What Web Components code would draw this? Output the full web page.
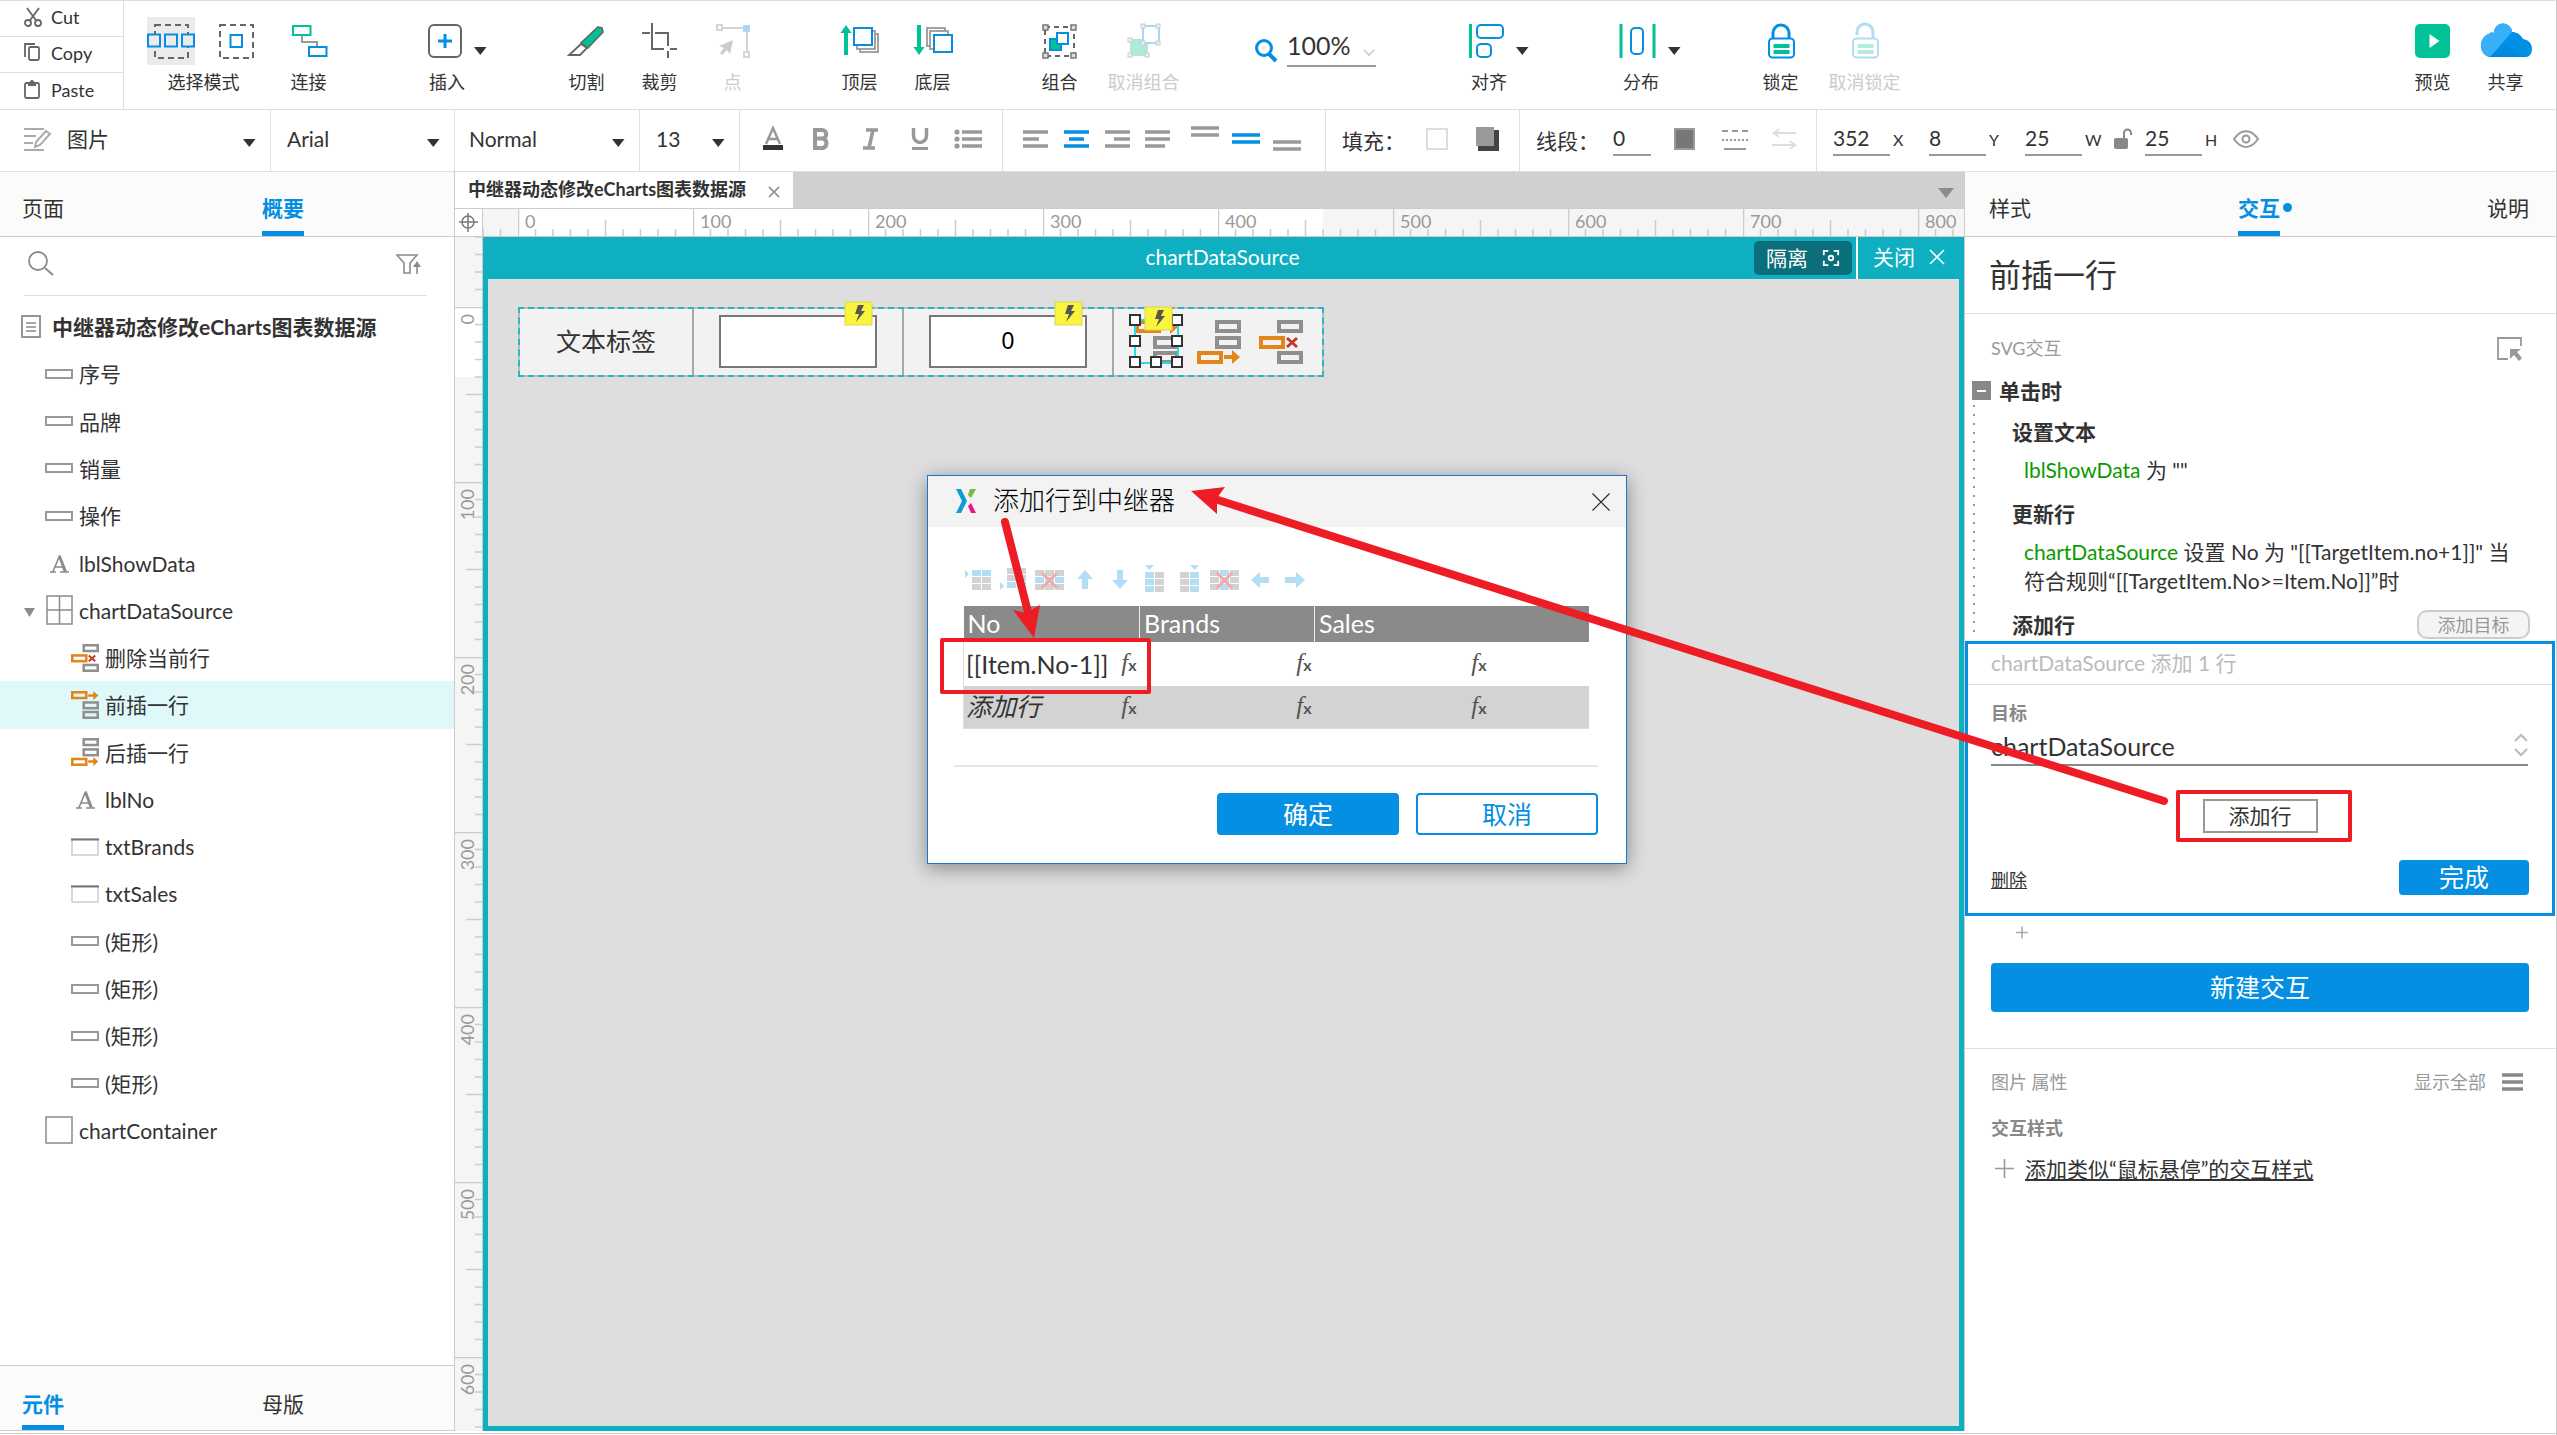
<!DOCTYPE html>
<html lang="zh-CN">
<head>
<meta charset="utf-8">
<title>中继器动态修改eCharts图表数据源</title>
<style>
  :root {
    --blue: #048fe3;
    --teal: #0eafc1;
    --green: #00c296;
    --ink: #333;
    --muted: #999;
    --line: #e0e0e0;
    --red: #ee1c25;
    --fs-s: 18px;
    --fs-m: 21px;
    --fs-l: 25px;
  }
  body {
    margin: 0;
    height: 100vh;
    box-sizing: border-box;
    border-top: 1px solid #ddd;
    border-right: 1px solid #ccc;
    display: flex;
    flex-direction: column;
    position: relative;
    overflow: hidden;
    background: #fff;
    color: var(--ink);
    font: 21px/29px Lato, "Noto Sans CJK SC", sans-serif;
  }
  .workspace { flex: 1; min-height: 0; display: grid; grid-template-columns: 455px minmax(0, 1fr) 592px; }
  footer { height: 1px; margin-top: 2px; border-top: 1px solid #ccc; }
</style>
</head>
<body>
  <ax-toolbar></ax-toolbar>
  <ax-formatbar></ax-formatbar>
  <div class="workspace">
    <ax-outline></ax-outline>
    <ax-editor></ax-editor>
    <ax-inspector></ax-inspector>
  </div>
  <footer></footer>
  <ax-dialog heading="添加行到中继器"></ax-dialog>
  <ax-annotations></ax-annotations>

<script>
const RESET = `
  *, *::before, *::after { box-sizing: border-box; }
  button, input, select { font: inherit; color: inherit; background: none; border: 0; padding: 0; margin: 0; border-radius: 0; outline: 0; min-width: 0; }
  button { cursor: pointer; }
  select { appearance: none; }
  h1, h2, h3, p, ul { margin: 0; padding: 0; font: inherit; }
  a { color: inherit; }
`;
function define(name, render) {
  customElements.define(name, class extends HTMLElement {
    connectedCallback() {
      if (this.shadowRoot) return;
      const root = this.attachShadow({ mode: 'open' });
      root.innerHTML = `<style>${RESET}</style>` + render(this);
    }
  });
}

/* ---------- icons: [width, height, content] ---------- */
const G = '#00c296', B = '#048fe3', D = '#666', M = '#999';
const corner = (x, y, c) => `<rect x="${x}" y="${y}" width="5" height="5" fill="#ddd" stroke="${c}" stroke-width="1.5"/>`;
const cells = (cols, blue) => {
  let s = '';
  for (let r = 0; r < 3; r++) for (let c = 0; c < cols; c++)
    s += `<rect x="${c * 10}" y="${r * 7}" width="9" height="6" fill="${blue(r, c) ? '#b3def5' : '#d2d2d2'}"/>`;
  return s;
};
const cross = '<path d="M7 3L22 18M22 3L7 18" stroke="#f4a9a9" stroke-width="3"/>';
const barG = (y) => `<rect x="20" y="${y}" width="22" height="9" fill="none" stroke="#8f8f8f" stroke-width="4"/>`;
const barO = (y) => `<rect x="2" y="${y}" width="22" height="9" fill="none" stroke="#e0861a" stroke-width="4"/>`;
const arrO = (y) => `<path d="M27 ${y - 2}h8v-5l8 7-8 7v-5h-8z" fill="#e0861a"/>`;
const ICONS = {
  cut: [20, 22, `<g fill="none" stroke="${D}" stroke-width="1.8"><circle cx="5" cy="17" r="3"/><circle cx="15" cy="17" r="3"/><path d="M4 2L13.500 15M16 2L6.500 15"/></g>`],
  copy: [20, 22, `<g fill="none" stroke="${D}" stroke-width="1.800"><path d="M2 15V2h10"/><rect x="6" y="5" width="10" height="13" rx="1.500"/></g>`],
  paste: [20, 22, `<rect x="2" y="4" width="14" height="15" rx="1.500" fill="none" stroke="${D}" stroke-width="1.800"/><path d="M5 3h2a2 2 0 0 1 4 0h2v4H5z" fill="${D}"/>`],
  selA: [48, 48, `<rect width="48" height="48" fill="#ebebeb"/><rect x="8" y="8" width="33" height="33" fill="none" stroke="${D}" stroke-width="2" stroke-dasharray="6 4"/><g fill="#ebebeb" stroke="${B}" stroke-width="2"><rect x="1" y="17.500" width="12" height="12"/><rect x="18" y="17.500" width="12" height="12"/><rect x="35" y="17.500" width="12" height="12"/></g>`],
  selB: [48, 48, `<rect x="8" y="8" width="33" height="33" fill="none" stroke="${D}" stroke-width="2" stroke-dasharray="6 4"/><rect x="18.500" y="18" width="11.500" height="12" fill="#fff" stroke="${B}" stroke-width="2"/>`],
  connect: [48, 48, `<g fill="none" stroke-width="2"><path d="M17 18v7h15v4" stroke="${M}"/><rect x="8" y="9" width="17.500" height="9" stroke="${G}"/><rect x="24" y="30" width="17.500" height="9" stroke="${B}"/></g>`],
  insert: [48, 48, `<rect x="6" y="8" width="32" height="32" rx="5" fill="none" stroke="${D}" stroke-width="2"/><path d="M15 24h14M22 17v14" stroke="${B}" stroke-width="3"/>`],
  slice: [48, 48, `<path d="M35 10l4 1 1 4-15 16-7-5z" fill="${G}" stroke="${D}" stroke-width="1.600"/><path d="M18 27l6 4-7 7H6z" fill="#fff" stroke="${D}" stroke-width="1.800"/>`],
  crop: [48, 48, `<path d="M6 16h8M19 16h13v13M32 34v7M16 6v26h12M34 32h7" fill="none" stroke="${D}" stroke-width="2"/>`],
  point: [48, 48, `<g stroke="#d5d5d5" stroke-width="2" fill="#fff"><path d="M12 11h26v26" fill="none"/><rect x="8" y="8" width="5" height="5"/><rect x="35" y="35" width="5" height="5"/></g><rect x="34" y="8" width="7" height="7" fill="#a9d8f6"/><path d="M24 23L10 29l5 2-4 5 2 2 5-5 3 4z" fill="#ccc"/>`],
  front: [48, 48, `<path d="M10 38V14" stroke="${G}" stroke-width="4"/><path d="M4.500 16L10 8l5.500 8z" fill="${G}"/><g fill="#fff" stroke="${M}" stroke-width="1.800"><rect x="24" y="17" width="18" height="18"/><rect x="21" y="14" width="18" height="18"/><rect x="18" y="11" width="18" height="17" stroke="${B}" stroke-width="2"/></g>`],
  back: [48, 48, `<path d="M10 8v24" stroke="${G}" stroke-width="4"/><path d="M4.500 30L10 38l5.500-8z" fill="${G}"/><g fill="#fff" stroke="${M}" stroke-width="1.800"><rect x="18" y="11" width="18" height="18"/><rect x="21" y="14" width="18" height="18"/><rect x="25" y="18" width="18" height="17" stroke="${B}" stroke-width="2"/></g>`],
  group: [48, 48, `<rect x="9" y="10" width="29" height="29" fill="none" stroke="${D}" stroke-width="2" stroke-dasharray="5 4"/>${corner(7, 8, '#777')}${corner(35, 8, '#777')}${corner(7, 36, '#777')}${corner(35, 36, '#777')}<rect x="14" y="22" width="11" height="11" fill="${G}" stroke="${B}" stroke-width="2"/><rect x="21" y="16" width="11" height="11" fill="#fff" stroke="${B}" stroke-width="2"/>`],
  ungroup: [48, 48, `<rect x="10" y="22" width="18" height="17" fill="#aeeadb"/><rect x="23" y="9" width="16" height="17" fill="#fff" stroke="#a9d8f6" stroke-width="2"/>${[[21,7],[36,7],[36,24],[8,21],[8,36],[25,36],[21,24]].map(p => `<rect x="${p[0]}" y="${p[1]}" width="4" height="4" fill="#eee" stroke="#ccc"/>`).join('')}`],
  zoom: [26, 26, `<circle cx="9" cy="11" r="7.500" fill="none" stroke="${B}" stroke-width="3"/><path d="M14 17l7 7" stroke="${B}" stroke-width="4"/>`],
  chev: [16, 10, `<path d="M2 2l6 6 6-6" fill="none" stroke="#ccc" stroke-width="2"/>`],
  align: [48, 48, `<path d="M5.500 7v34" stroke="${G}" stroke-width="3"/><g fill="none" stroke="${B}" stroke-width="2"><rect x="12" y="8" width="26" height="13" rx="4"/><rect x="12" y="27" width="14" height="13" rx="4"/></g>`],
  distribute: [48, 48, `<path d="M4 7v34M37 7v34" stroke="${G}" stroke-width="3"/><rect x="14" y="11" width="12" height="26" rx="4" fill="none" stroke="${B}" stroke-width="2"/>`],
  lock: [48, 48, `<path d="M16 22v-6a8 8 0 0 1 16 0v6" fill="none" stroke="${B}" stroke-width="3"/><rect x="12" y="21.500" width="25" height="19" rx="3.500" fill="#fff" stroke="${B}" stroke-width="2"/><path d="M16.500 29h16M16.500 35h16" stroke="${G}" stroke-width="4"/>`],
  unlock: [48, 48, `<g opacity=".3"><path d="M16 18v-3a8 8 0 0 1 16 0v6" fill="none" stroke="${B}" stroke-width="3"/><rect x="12" y="21.500" width="25" height="19" rx="3.500" fill="#fff" stroke="${B}" stroke-width="2"/><path d="M16.500 29h16M16.500 35h16" stroke="${G}" stroke-width="4"/></g>`],
  preview: [48, 48, `<rect x="6" y="7" width="35" height="34" rx="5" fill="${G}"/><path d="M20.500 17v14l10-7z" fill="#fff"/>`],
  share: [52, 48, `<path d="M10 40a10 11 0 0 1-9-11c0-7 4-11 8-12 1-1 2-2 5-1a9 9 0 0 1 18-1c3 0 8 1 11 7 6 1 9 5 9 10s-3 8-6 8z" fill="#0090e5"/><path d="M10 40a10 11 0 0 1-9-11c0-7 4-11 8-12 1-1 2-2 5-1a9 9 0 0 1 18-1L10 40z" fill="#38b0f8"/><path d="M25 28l21 12H9z" fill="#0083d8" opacity=".5"/>`],
  caret: [12, 8, `<path d="M0 0h12.500L6.250 8z" fill="#333"/>`],
  caretG: [16, 10, `<path d="M0 0h16L8 10z" fill="#8b8b8b"/>`],
  edit: [28, 26, `<g fill="none" stroke="#aaa" stroke-width="2"><path d="M1 3h20M1 10h12M1 17h9M1 24h20"/><path d="M12 21l1-5L23 5l4 3-10 11z"/></g>`],
  fontA: [28, 28, `<path d="M7 19L14 3l7 16M9.500 14h9" fill="none" stroke="${M}" stroke-width="2.500"/><rect x="4" y="20" width="20" height="5" fill="#333"/>`],
  bold: [28, 28, `<path d="M7 5h7a4 4 0 0 1 0 8.500H7zM7 13.500h8a5 5 0 0 1 0 9.500H7z" fill="none" stroke="${M}" stroke-width="4"/>`],
  italic: [28, 28, `<path d="M9 5h12M6 23h12M16 5l-4 18" fill="none" stroke="${M}" stroke-width="3.500"/>`],
  under: [28, 28, `<path d="M7.500 3v8a6.500 6.500 0 0 0 13 0V3" fill="none" stroke="${M}" stroke-width="3.500"/><path d="M6 23.500h16" stroke="${M}" stroke-width="3"/>`],
  list: [28, 28, `<path d="M7 7h20M7 14h20M7 21h20" stroke="${M}" stroke-width="3.500"/><g fill="${M}"><circle cx="2" cy="7" r="2.600"/><circle cx="2" cy="14" r="2.600"/><circle cx="2" cy="21" r="2.600"/></g>`],
  alL: [26, 28, `<path d="M0 7h25M0 14h16M0 21h25" stroke="${M}" stroke-width="3.500"/>`],
  alC: [26, 28, `<path d="M0 7h25M5 14h15M0 21h25" stroke="${B}" stroke-width="3.500"/>`],
  alR: [26, 28, `<path d="M0 7h25M9 14h16M0 21h25" stroke="${M}" stroke-width="3.500"/>`],
  alJ: [26, 28, `<path d="M-1 7h25M-1 14h25M-1 21h20" stroke="${M}" stroke-width="3.500"/>`],
  vT: [28, 28, `<path d="M-1 3h28M-1 10h28" stroke="${M}" stroke-width="3.500"/>`],
  vM: [28, 28, `<path d="M-1 10h28M-1 17h28" stroke="${B}" stroke-width="3.500"/>`],
  vB: [28, 28, `<path d="M-1 17h28M-1 24h28" stroke="${M}" stroke-width="3.500"/>`],
  fill: [22, 22, `<rect x="1" y="1" width="20" height="20" fill="#fff" stroke="#ddd" stroke-width="2"/>`],
  shadow: [24, 24, `<rect x="2" y="3" width="21" height="21" fill="#444"/><rect width="18" height="19" fill="#999"/>`],
  stroke: [26, 22, `<rect x="1" y="1" width="19" height="20" fill="#777" stroke="#999" stroke-width="2"/>`],
  dashes: [26, 22, `<g stroke="${M}" stroke-width="2"><path d="M-1 3h26" stroke-dasharray="6 4"/><path d="M-1 12h26" stroke-dasharray="2 2"/><path d="M1 21h22"/></g>`],
  arrows: [26, 22, `<path d="M24 5H2l5-4M2 5l5 4M0 17h23l-5-4M23 17l-5 4" fill="none" stroke="#ddd" stroke-width="2"/>`],
  padlock: [20, 24, `<rect x="1" y="11" width="14" height="11" rx="2" fill="#888"/><path d="M11 11V6a3.500 3.500 0 0 1 7 0v2" fill="none" stroke="#888" stroke-width="2"/>`],
  eye: [26, 18, `<path d="M1 9c7-10.500 17-10.500 24 0-7 10.500-17 10.500-24 0z" fill="none" stroke="${M}" stroke-width="2"/><circle cx="13" cy="9" r="3.500" fill="none" stroke="${M}" stroke-width="2"/>`],
  search: [26, 26, `<circle cx="10" cy="10" r="9" fill="none" stroke="#8b8b8b" stroke-width="1.800"/><path d="M17 17l8 7" stroke="#8b8b8b" stroke-width="2"/>`],
  funnel: [26, 22, `<path d="M1 2h20l-7 8v10H8V10z" fill="none" stroke="#8b8b8b" stroke-width="1.600"/><path d="M21 21v-9" stroke="#8b8b8b" stroke-width="1.600"/><path d="M17 14l4-6 4 6z" fill="#8b8b8b"/>`],
  page: [20, 24, `<rect x="1" y="1" width="18" height="21" fill="none" stroke="#8b8b8b" stroke-width="1.800"/><path d="M5 8h10M5 12h10M5 16h10" stroke="#8b8b8b" stroke-width="1.500"/>`],
  rect: [28, 28, `<rect x="1" y="10" width="26" height="8" fill="#fff" stroke="#999" stroke-width="2"/>`],
  glyphA: [28, 28, `<path d="M5 23h6M15 23h9M8 22.500L14 8l6 14M10 18h8" fill="none" stroke="#8b8b8b" stroke-width="1.600"/><path d="M13.500 7l5 15.500h3.500L15.500 6z" fill="#8b8b8b"/>`],
  repeater: [28, 30, `<g fill="none" stroke="#8b8b8b" stroke-width="1.500"><rect x="2" y="1" width="25" height="28"/><path d="M14.500 1v28M2 15h25"/></g>`],
  square: [28, 28, `<rect x="1" y="1" width="26" height="26" fill="#fff" stroke="#8b8b8b" stroke-width="1.500"/>`],
  field: [28, 18, `<rect x="1" y="1" width="26" height="16" fill="#fff" stroke="#ccc" stroke-width="1.500"/><path d="M0 1.500h28" stroke="#777" stroke-width="2"/>`],
  down: [12, 9, `<path d="M0 0h11L5.500 9z" fill="#8b8b8b"/>`],
  rowDel: [44, 44, `${barG(2)}${barG(33)}${barO(18)}<path d="M28 18l10 9M38 18l-10 9" stroke="#c0392b" stroke-width="3"/>`],
  rowBefore: [44, 44, `${barO(2)}${arrO(7)}${barG(18)}${barG(33)}`],
  rowAfter: [44, 44, `${barG(2)}${barG(18)}${barO(33)}${arrO(37)}`],
  origin: [20, 20, `<g fill="none" stroke="#777" stroke-width="1.500"><circle cx="9" cy="9" r="6"/><path d="M9 0v19M0 9h19"/></g>`],
  close: [16, 16, `<path d="M1 1l14 14M15 1L1 15" stroke="currentColor" stroke-width="1.600"/>`],
  closeTab: [14, 14, `<path d="M0 2l10 10M10 2L0 12" stroke="currentColor" stroke-width="1.600"/>`],
  closeBig: [20, 20, `<path d="M1.500 1.500l17 17M18.500 1.500l-17 17" stroke="#222" stroke-width="1.100"/>`],
  isolate: [20, 20, `<g fill="none" stroke="#fff" stroke-width="2"><path d="M2 7V2h5M13 2h5v5M18 13v5h-5M7 18H2v-5"/><circle cx="10" cy="10" r="2.500"/></g>`],
  bolt: [27, 23, `<rect width="27" height="23" fill="#faf53c" stroke="#d9d45a"/><path d="M13 3h6l-3 6h4l-9 11 3-8h-4z" fill="#555"/>`],
  logo: [22, 26, `<path d="M1 1h5l6 12-6 12H1l6-12z" fill="#0f9ad8"/><path d="M15 1h6l-5 9-3-3z" fill="#72bf3b"/><path d="M13 18l3-3 5 10h-5z" fill="#e6168c"/>`],
  tRowAbove: [29, 30, `<path d="M0 5v8l4-4z" fill="#b3def5"/><g transform="translate(7 5)">${cells(2, r => r == 0)}</g>`],
  tRowBelow: [29, 30, `<path d="M0 17v8l4-4z" fill="#b3def5"/><g transform="translate(7 3)">${cells(2, r => r == 2)}</g>`],
  tRowDel: [29, 20, cells(3, r => r == 1) + cross],
  tUp: [18, 20, `<path d="M6 19V9H1l8-9 8 9h-5v10z" fill="#b3def5"/>`],
  tDown: [18, 20, `<path d="M6 0v10H1l8 9 8-9h-5V0z" fill="#b3def5"/>`],
  tColL: [20, 30, `<path d="M0 0h9L4.500 5z" fill="#b3def5"/><g transform="translate(0 7)">${cells(2, (r, c) => c == 0)}</g>`],
  tColR: [20, 30, `<path d="M10 0h9l-4.500 5z" fill="#b3def5"/><g transform="translate(0 7)">${cells(2, (r, c) => c == 1)}</g>`],
  tColDel: [29, 20, cells(3, (r, c) => c == 1) + cross],
  tLeft: [18, 18, `<path d="M18 6H9V1L0 9l9 8v-5h9z" fill="#b3def5"/>`],
  tRight: [20, 18, `<path d="M0 6h11V1l9 8-9 8v-5H0z" fill="#b3def5"/>`],
  pick: [26, 25, `<path d="M10 23H0V2h23v8" fill="none" stroke="${M}" stroke-width="1.800"/><path d="M12 13h11l-4 3 5 6-3 3-5-6-4 4z" fill="${M}"/>`],
  updown: [14, 24, `<path d="M1 7l6-6 6 6M1 15l6 6 6-6" fill="none" stroke="#bbb" stroke-width="2"/>`],
  plusS: [14, 14, `<path d="M0 6.500h12M6 .5v12" stroke="#aaa" stroke-width="1.600"/>`],
  plusL: [20, 20, `<path d="M0 9.500h19M9.500 0v19" stroke="${M}" stroke-width="1.600"/>`],
  menu: [22, 20, `<path d="M0 3h21M0 10h21M0 17h21" stroke="#888" stroke-width="3.500"/>`]
};
define('ax-icon', (el) => {
  const [w, h, body] = ICONS[el.getAttribute('name')];
  const size = Number(el.getAttribute('size')) || w;
  return `<style>:host{display:block;flex:none}svg{display:block;overflow:visible}</style>
    <svg width="${size}" height="${h * size / w}" viewBox="0 0 ${w} ${h}" aria-hidden="true">${body}</svg>`;
});

/* ---------- top toolbar ---------- */
define('ax-tool', (el) => `
  <style>
    :host { display: flex; align-items: flex-start; }
    .tool { width: var(--tool-w, 73px); display: flex; flex-direction: column; align-items: center; gap: 5px; font-size: var(--fs-s); line-height: 24px; white-space: nowrap; }
    .icons { display: flex; gap: 17px; }
    :host([disabled]) .tool { color: #ccc; }
    .more { height: 48px; padding-top: 20px; }
  </style>
  <button class="tool"><span class="icons">${el.getAttribute('icons').split(' ').map(n => `<ax-icon name="${n}"></ax-icon>`).join('')}</span><slot></slot></button>
  ${el.hasAttribute('menu') ? `<button class="more" aria-label="更多"><ax-icon name="caret"></ax-icon></button>` : ''}`);

define('ax-toolbar', () => `
  <style>
    :host { display: flex; height: 109px; border-bottom: 1px solid var(--line); box-sizing: border-box; flex: none; }
    .clip { width: 124px; border-right: 1px solid var(--line); display: grid; grid-template-rows: repeat(3, 1fr); font-size: var(--fs-s); }
    .clip button { display: flex; align-items: center; gap: 8px; padding: 0 0 3px 23px; border-bottom: 1px solid var(--line); }
    .clip button:last-child { border: 0; padding-bottom: 2px; }
    .tools { flex: 1; display: flex; padding: 16px 14px 0 23px; }
    .g { display: flex; margin-left: 64px; }
    .g:first-child { margin-left: 0; gap: 12px; }
    .near { margin-left: 54px; }
    .mid { margin-left: 75px; }
    .far { margin-left: 86px; }
    .wide { --tool-w: 95px; }
    .drop { --tool-w: 54px; }
    .zoom { align-items: flex-start; padding-top: 11px; gap: 6px; }
    .zoom > ax-icon { margin-top: 9px; }
    .zoom label { display: flex; border-bottom: 2px solid #999; }
    .zoom select { width: 75px; height: 37px; padding-bottom: 3px; font-size: var(--fs-l); }
    .zoom label ax-icon { margin-top: 20px; }
    .end { margin-left: auto; }
  </style>
  <div class="clip">
    <button><ax-icon name="cut"></ax-icon>Cut</button>
    <button><ax-icon name="copy"></ax-icon>Copy</button>
    <button><ax-icon name="paste"></ax-icon>Paste</button>
  </div>
  <div class="tools">
    <div class="g"><ax-tool icons="selA selB" style="--tool-w:113px">选择模式</ax-tool><ax-tool icons="connect">连接</ax-tool></div>
    <div class="g drop mid"><ax-tool icons="insert" menu>插入</ax-tool></div>
    <div class="g"><ax-tool icons="slice">切割</ax-tool><ax-tool icons="crop">裁剪</ax-tool><ax-tool icons="point" disabled>点</ax-tool></div>
    <div class="g near"><ax-tool icons="front">顶层</ax-tool><ax-tool icons="back">底层</ax-tool></div>
    <div class="g near"><ax-tool icons="group">组合</ax-tool><ax-tool class="wide" icons="ungroup" disabled>取消组合</ax-tool></div>
    <div class="g zoom"><ax-icon name="zoom"></ax-icon><label><select aria-label="缩放"><option>100%</option></select><ax-icon name="chev" size="14"></ax-icon></label></div>
    <div class="g drop far"><ax-tool icons="align" menu>对齐</ax-tool></div>
    <div class="g drop far"><ax-tool icons="distribute" menu>分布</ax-tool></div>
    <div class="g"><ax-tool icons="lock">锁定</ax-tool><ax-tool class="wide" icons="unlock" disabled>取消锁定</ax-tool></div>
    <div class="g end"><ax-tool icons="preview">预览</ax-tool><ax-tool icons="share">共享</ax-tool></div>
  </div>`);

/* ---------- format bar ---------- */
const pos = (v, l, c = '') => `<label class="pos ${c}"><input value="${v}">${l}</label>`;
define('ax-formatbar', () => `
  <style>
    :host { display: flex; height: 62px; flex: none; box-sizing: border-box; border-bottom: 1px solid var(--line); }
    .s { display: flex; align-items: center; border-right: 1px solid var(--line); padding: 0 0 3px 16px; }
    .sel { padding-right: 15px; }
    .sel select { flex: 1; height: 40px; padding-bottom: 2px; }
    .sel ax-icon[name=caret] { margin-top: 8px; }
    .b49 button { width: 49px; height: 40px; display: grid; place-items: center; }
    .b41 button { width: 41px; height: 40px; display: grid; place-items: center; }
    .gap { margin-left: 6px; }
    .cap { line-height: 34px; padding-top: 4px; white-space: nowrap; }
    input { height: 34px; width: 57px; border-bottom: 2px solid #999; padding-bottom: 1px; }
    .pos { display: flex; align-items: center; gap: 3px; width: 96px; font-size: 16px; }
    .pos input { font-size: var(--fs-m); }
    .tight { width: 88px; }
    .s:last-child { border: 0; }
  </style>
  <div class="s sel" style="width:271px;padding-left:23px"><ax-icon name="edit"></ax-icon><select aria-label="样式" style="margin-left:16px"><option>图片</option></select><ax-icon name="caret"></ax-icon></div>
  <div class="s sel" style="width:184px"><select aria-label="字体"><option>Arial</option></select><ax-icon name="caret"></ax-icon></div>
  <div class="s sel" style="width:185px;padding-left:14px"><select aria-label="字重"><option>Normal</option></select><ax-icon name="caret"></ax-icon></div>
  <div class="s sel" style="width:100px"><select aria-label="字号"><option>13</option></select><ax-icon name="caret"></ax-icon></div>
  <div class="s b49" style="width:263px;padding-left:8px">${['fontA', 'bold', 'italic', 'under', 'list'].map(n => `<button aria-label="${n}"><ax-icon name="${n}"></ax-icon></button>`).join('')}</div>
  <div class="s b41" style="width:323px;padding-left:12px">${['alL', 'alC', 'alR', 'alJ'].map(n => `<button aria-label="${n}"><ax-icon name="${n}"></ax-icon></button>`).join('')}<span class="gap"></span>${['vT', 'vM', 'vB'].map(n => `<button aria-label="${n}"><ax-icon name="${n}"></ax-icon></button>`).join('')}</div>
  <div class="s" style="width:194px;gap:28px"><span class="cap" style="width:56px">填充：</span><ax-icon name="fill"></ax-icon><ax-icon name="shadow"></ax-icon></div>
  <div class="s" style="width:297px;gap:23px"><label class="cap" for="sw" style="width:54px">线段：</label><input id="sw" value="0" style="width:38px"><ax-icon name="stroke"></ax-icon><ax-icon name="dashes"></ax-icon><ax-icon name="arrows"></ax-icon></div>
  <div class="s">${pos(352, 'X')}${pos(8, 'Y')}${pos(25, 'W', 'tight')}<ax-icon name="padlock" style="margin-right:12px"></ax-icon>${pos(25, 'H', 'tight')}<ax-icon name="eye"></ax-icon></div>`);

/* ---------- tab strip ---------- */
define('ax-tabs', (el) => `
  <style>
    :host { display: block; flex: none; background: #fbfbfb; border-bottom: 1px solid #ccc; }
    nav { height: 64px; padding: 0 27px 0 24px; display: flex; justify-content: space-between; }
    :host([columns]) nav { padding: 0 0 0 22px; display: grid; grid-template-columns: 240px 1fr; justify-items: start; }
    button { padding: var(--drop, 12px) 0 0; border-bottom: 5px solid transparent; position: relative; }
    button.on { color: var(--blue); font-weight: 700; border-color: var(--blue); }
    i { position: absolute; left: 100%; margin-left: 3px; top: 31px; width: 9px; height: 9px; border-radius: 50%; background: var(--blue); }
  </style>
  <nav>${el.getAttribute('items').split(' ').map((t, i) => `<button class="${i == el.getAttribute('active') ? 'on' : ''}">${t}${i == el.getAttribute('dot') ? '<i></i>' : ''}</button>`).join('')}</nav>`);

/* ---------- outline panel ---------- */
define('ax-node', (el) => `
  <style>
    :host { display: flex; align-items: center; padding-left: calc(24px + 26px * var(--level, 0)); white-space: nowrap; }
    :host([selected]) { background: #dff8fa; }
    .toggle { width: 21px; display: flex; flex: none; padding-top: 4px; }
    .icon { width: 28px; margin-right: 6px; flex: none; }
    :host([root]) { padding-left: 21px; font-weight: 700; }
    :host([root]) .toggle { display: none; }
    :host([root]) .icon { width: 20px; margin-right: 11px; }
  </style>
  <span class="toggle">${el.hasAttribute('open') ? '<ax-icon name="down"></ax-icon>' : ''}</span>
  <span class="icon"><ax-icon name="${el.getAttribute('icon')}" size="${el.hasAttribute('root') ? 20 : 28}"></ax-icon></span><slot></slot>`);

const NODES = [['rect', 0, '序号'], ['rect', 0, '品牌'], ['rect', 0, '销量'], ['rect', 0, '操作'], ['glyphA', 0, 'lblShowData'],
  ['repeater', 0, 'chartDataSource', 'open'], ['rowDel', 1, '删除当前行'], ['rowBefore', 1, '前插一行', 'selected'], ['rowAfter', 1, '后插一行'],
  ['glyphA', 1, 'lblNo'], ['field', 1, 'txtBrands'], ['field', 1, 'txtSales'], ['rect', 1, '(矩形)'], ['rect', 1, '(矩形)'], ['rect', 1, '(矩形)'], ['rect', 1, '(矩形)'], ['square', 0, 'chartContainer']];
define('ax-outline', () => `
  <style>
    :host { display: flex; flex-direction: column; border-right: 1px solid #ccc; min-height: 0; }
    .search { height: 59px; margin: 0 27px 7px 24px; padding: 0 5px 4px 4px; border-bottom: 1px solid var(--line); display: flex; align-items: center; gap: 10px; flex: none; }
    .search input { flex: 1; height: 40px; }
    .tree { height: 851px; display: grid; grid-auto-rows: 1fr; }
    .bottom { margin-top: auto; border-top: 1px solid #ccc; --drop: 16px; }
  </style>
  <ax-tabs columns items="页面 概要" active="1"></ax-tabs>
  <div class="search"><ax-icon name="search"></ax-icon><input type="search" aria-label="搜索"><ax-icon name="funnel"></ax-icon></div>
  <div class="tree"><ax-node root icon="page">中继器动态修改eCharts图表数据源</ax-node>${NODES.map(([i, l, t, a = '']) => `<ax-node icon="${i}" style="--level:${l}" ${a}>${t}</ax-node>`).join('')}</div>
  <ax-tabs class="bottom" columns items="元件 母版" active="0"></ax-tabs>`);

/* ---------- rulers ---------- */
define('ax-ruler', (el) => {
  const v = el.hasAttribute('vertical');
  const tick = (p, from) => v ? `M${from} ${p}H27` : `M${p} ${from}V27`;
  let d = '';
  for (let k = 1; k < 10; k++) d += tick(k * 17.5, k == 5 ? 11 : 20);
  const svg = (extra) => `<svg width="${v ? 27 : 175}" height="${v ? 175 : 27}"><path d="${d}${extra}" fill="none" stroke="#ccc" stroke-width="1.500"/></svg>`;
  const marks = [0, 100, 200, 300, 400, 500, 600, 700, 800].slice(0, v ? 7 : 9);
  return `
  <style>
    :host { display: flex; overflow: hidden; color: #999; font-size: var(--fs-s); background: linear-gradient(90deg, #f5f5f5 35px, #fff 35px 840px, #f5f5f5 840px); border-bottom: 1px solid #ccc; min-width: 0; }
    :host([vertical]) { flex-direction: column; min-height: 0; background: linear-gradient(#f5f5f5 70px, #fff 70px 140px, #f5f5f5 140px); border-bottom: 0; border-right: 1px solid #ccc; }
    svg { display: block; flex: none; }
    .lead { flex: none; overflow: hidden; display: flex; justify-content: flex-end; width: 35px; height: 27px; }
    .cell { flex: none; position: relative; width: 175px; height: 27px; padding-left: 7px; line-height: 25px; }
    .cell svg { position: absolute; left: 0; top: 0; }
    :host([vertical]) .lead { width: 27px; height: 70px; flex-direction: column; }
    :host([vertical]) .cell { width: 27px; height: 175px; padding: 7px 0 0; }
    :host([vertical]) span { display: block; width: 25px; writing-mode: vertical-rl; transform: rotate(180deg); }
  </style>
  <div class="lead">${svg('')}</div>
  ${marks.map(n => `<div class="cell">${svg(v ? 'M0 .5H27' : 'M.5 0V27')}<span>${n}</span></div>`).join('')}`;
});

/* ---------- editor ---------- */
const handles = [[0, 0], [42, 0], [0, 21], [42, 21], [0, 42], [21, 42], [42, 42]].map(([x, y]) => `<rect x="${x - 5}" y="${y - 5}" width="10" height="10" fill="#fff" stroke="#333" stroke-width="2"/>`).join('');
define('ax-repeater', () => `
  <style>
    :host { display: grid; grid-template-columns: 174px 210px 210px 208px; width: 806px; height: 70px; box-sizing: border-box; border: 2px dashed #2ab5c2; background: linear-gradient(#f2f2f2, #f2f2f2) padding-box, #bbb border-box; font-size: var(--fs-l); }
    .c { display: flex; align-items: center; justify-content: center; border-right: 2px solid #a9a9a9; padding-bottom: 1px; }
    .c:last-child { border: 0; gap: 18px; padding: 0 0 0 2px; }
    .w { position: relative; }
    .w input { display: block; width: 158px; height: 53px; border: 2px solid #777; background: #fff; text-align: center; color: #000; font: 23px "Liberation Sans", sans-serif; }
    .badge { position: absolute; right: 5px; top: -13px; }
    .w svg { position: absolute; left: 0; top: 0; overflow: visible; }
    .w ax-icon.badge.in { left: 10px; right: auto; }
  </style>
  <div class="c">文本标签</div>
  <div class="c"><div class="w"><input aria-label="txtBrands"><ax-icon class="badge" name="bolt"></ax-icon></div></div>
  <div class="c"><div class="w"><input aria-label="txtSales" value="0"><ax-icon class="badge" name="bolt"></ax-icon></div></div>
  <div class="c"><div class="w"><ax-icon name="rowBefore"></ax-icon><svg width="44" height="44"><rect width="43" height="43" fill="none" stroke="#1fe0ea" stroke-width="2"/>${handles}</svg><ax-icon class="badge in" name="bolt"></ax-icon></div><ax-icon name="rowAfter"></ax-icon><ax-icon name="rowDel"></ax-icon></div>`);

define('ax-editor', () => `
  <style>
    :host { display: grid; grid-template: 37px 28px 1fr / 28px minmax(0, 1fr); min-height: 0; min-width: 0; }
    .files { grid-column: 1 / -1; display: flex; justify-content: space-between; background: #d0d0d0; border-bottom: 1px solid #ccc; padding-right: 10px; }
    .file { display: flex; align-items: center; justify-content: space-between; background: #fff; width: 338px; padding: 0 10px 2px 13px; font-size: var(--fs-s); font-weight: 700; white-space: nowrap; }
    .file button { color: #888; padding-top: 6px; }
    .files > button { padding-top: 6px; }
    .corner { display: grid; place-items: center; border-right: 1px solid #ccc; border-bottom: 1px solid #ccc; }
    .canvas { display: flex; flex-direction: column; background: #dedede; border: 5px solid var(--teal); border-top: 0; min-width: 0; }
    header { height: 42px; background: var(--teal); color: #fff; display: grid; grid-template-columns: 1fr auto 1fr; align-items: center; }
    .act { grid-column: 3; display: flex; justify-content: flex-end; align-items: stretch; height: 42px; padding-right: 14px; }
    .act button { display: flex; align-items: center; gap: 14px; line-height: 32px; }
    .iso { background: #0a6f7a; border-radius: 5px; margin: 4px 4px 4px 0; padding: 0 12px 0 12px; }
    .shut { border-left: 2px solid #fff; padding: 0 0 2px 15px; }
    h1 { grid-column: 2; padding: 0 2px 3px 0; }
    .stage { padding: 28px 30px; }
  </style>
  <div class="files"><div class="file">中继器动态修改eCharts图表数据源<button aria-label="关闭"><ax-icon name="closeTab"></ax-icon></button></div><button aria-label="全部标签"><ax-icon name="caretG"></ax-icon></button></div>
  <div class="corner"><ax-icon name="origin"></ax-icon></div>
  <ax-ruler></ax-ruler>
  <ax-ruler vertical></ax-ruler>
  <div class="canvas">
    <header><h1>chartDataSource</h1><div class="act"><button class="iso">隔离<ax-icon name="isolate" size="18"></ax-icon></button><button class="shut">关闭<ax-icon name="close"></ax-icon></button></div></header>
    <div class="stage"><ax-repeater></ax-repeater></div>
  </div>`);

/* ---------- inspector ---------- */
define('ax-inspector', () => `
  <style>
    :host { display: flex; flex-direction: column; border-left: 1px solid #ccc; min-width: 0; }
    h1 { height: 77px; line-height: 76px; padding-left: 24px; font-size: 32px; border-bottom: 1px solid var(--line); }
    .cap { font-size: var(--fs-s); color: var(--muted); line-height: 28px; }
    .row { display: flex; justify-content: space-between; align-items: center; }
    .ix { padding: 19px 26px 0 26px; }
    .ix .row.first { height: 30px; padding-right: 6px; }
    .event { display: flex; align-items: center; gap: 8px; margin: 13px 0 0 -19px; font-weight: 700; }
    .fold { width: 19px; height: 19px; background: #888; display: grid; place-items: center; }
    .fold::before { content: ""; width: 9px; height: 2px; background: #fff; }
    .acts { margin: 0 0 2px -19px; padding-left: 40px; background: linear-gradient(#999 2px, transparent 2px) 1px 0 / 2px 9px repeat-y; }
    h3 { font-weight: 700; padding-top: 12px; }
    h3 + p { padding-top: 9px; }
    p + h3, p + .row { padding-top: 15px; }
    p { padding-left: 12px; }
    p b { font-weight: 400; color: #0a9a00; }
    .acts .row h3 { padding: 0; }
    .target { font-size: var(--fs-s); color: var(--muted); width: 113px; height: 29px; line-height: 24px; border: 2px solid #ccc; border-radius: 10px; background: #f4f4f4; }
    .box { border: 3px solid var(--blue); margin-right: 1px; }
    .sum { height: 41px; line-height: 38px; padding-left: 23px; color: #bbb; border-bottom: 1px solid var(--line); }
    .form { padding: 14px 23px 18px 23px; display: flex; flex-direction: column; }
    .form .cap { font-weight: 700; color: #888; }
    .pick { display: flex; align-items: center; margin: 1px 1px 33px 0; border-bottom: 2px solid #888; }
    .pick select { flex: 1; height: 36px; font-size: var(--fs-l); }
    .add { align-self: center; width: 115px; height: 34px; line-height: 28px; border: 2px solid #999; margin-bottom: 27px; }
    .form .row a { font-size: var(--fs-s); padding-top: 6px; }
    .primary { background: var(--blue); color: #fff; border-radius: 4px; font-size: var(--fs-l); }
    .done { width: 130px; height: 35px; line-height: 33px; }
    .plus { height: 34px; padding-left: 51px; display: flex; align-items: center; }
    .new { height: 49px; margin: 13px 27px 36px 26px; }
    .props { border-top: 1px solid var(--line); padding: 19px 32px 0 26px; }
    .all { display: flex; align-items: center; gap: 16px; }
    .style { font-weight: 700; padding-top: 18px; color: #888; }
    .link { display: flex; align-items: center; gap: 10px; padding: 12px 0 0 4px; }
  </style>
  <ax-tabs items="样式 交互 说明" active="1" dot="1"></ax-tabs>
  <h1>前插一行</h1>
  <div class="ix">
    <div class="row first"><span class="cap">SVG交互</span><ax-icon name="pick"></ax-icon></div>
    <h2 class="event"><button class="fold" aria-label="折叠"></button>单击时</h2>
    <div class="acts">
      <h3>设置文本</h3>
      <p><b>lblShowData</b> 为 ""</p>
      <h3>更新行</h3>
      <p><b>chartDataSource</b> 设置 No 为 "[[TargetItem.no+1]]" 当符合规则“[[TargetItem.No&gt;=Item.No]]”时</p>
      <div class="row"><h3>添加行</h3><button class="target">添加目标</button></div>
    </div>
  </div>
  <div class="box">
    <div class="sum">chartDataSource 添加 1 行</div>
    <div class="form">
      <label class="cap" for="goal">目标</label>
      <div class="pick"><select id="goal"><option>chartDataSource</option></select><ax-icon name="updown"></ax-icon></div>
      <button class="add">添加行</button>
      <div class="row"><a href="#">删除</a><button class="primary done">完成</button></div>
    </div>
  </div>
  <div class="plus"><ax-icon name="plusS"></ax-icon></div>
  <button class="primary new">新建交互</button>
  <div class="props">
    <div class="row cap"><span>图片 属性</span><span class="all">显示全部<ax-icon name="menu"></ax-icon></span></div>
    <div class="cap style">交互样式</div>
    <div class="link"><ax-icon name="plusL"></ax-icon><a href="#">添加类似“鼠标悬停”的交互样式</a></div>
  </div>`);

/* ---------- dialog ---------- */
const fx = '<button class="fx" aria-label="fx"><i>f</i>x</button>';
const cell = (t = '') => `<td><div><span>${t}</span>${fx}</div></td>`;
define('ax-dialog', (el) => `
  <style>
    :host { position: absolute; left: 927px; top: 474px; width: 700px; box-sizing: border-box; background: #fff; border: 1px solid #1a78c8; box-shadow: 0 4px 18px rgba(0, 0, 0, .4); font-size: var(--fs-l); }
    header { height: 51px; background: #f3f3f3; display: flex; align-items: center; gap: 16px; padding: 0 15px 2px 27px; color: #000; font-size: 26px; font-weight: 300; }
    header button { margin-left: auto; padding-top: 3px; }
    .bar { display: flex; padding: 37px 0 10px 34px; }
    .bar button { width: 35px; height: 32px; display: grid; place-items: center; }
    table { margin-left: 35px; width: 626px; table-layout: fixed; border-collapse: collapse; border-bottom: 1px solid #ddd; }
    th { height: 36px; padding: 0 0 2px 4px; text-align: left; font-weight: 400; color: #fff; background: #8a8a8a; border-right: 1px solid #eee; }
    th:nth-child(n+3) { border: 0; }
    td { padding: 0 0 0 3px; height: 44px; }
    td:nth-child(-n+1) { border-left: 1px solid #ddd; padding-left: 2px; }
    tr.new td { height: 42px; background: #d3d3d3; font-style: italic; }
    td div { display: flex; justify-content: space-between; align-items: center; height: 34px; }
    .fx { font: bold 16px/28px Lato, sans-serif; color: #555; padding-right: 3px; display: flex; align-items: baseline; }
    .fx i { font: italic 25px/28px "Liberation Serif", serif; }
    footer { margin: 36px 28px 28px 26px; padding-top: 26px; border-top: 2px solid #e6e6e6; display: flex; justify-content: flex-end; gap: 17px; }
    footer button { width: 182px; height: 42px; border-radius: 4px; border: 2px solid var(--blue); color: var(--blue); line-height: 36px; }
    footer .ok { background: var(--blue); color: #fff; }
  </style>
  <header><ax-icon name="logo"></ax-icon>${el.getAttribute('heading')}<button aria-label="关闭"><ax-icon name="closeBig"></ax-icon></button></header>
  <div class="bar">${['tRowAbove', 'tRowBelow', 'tRowDel', 'tUp', 'tDown', 'tColL', 'tColR', 'tColDel', 'tLeft', 'tRight'].map(n => `<button aria-label="${n}"><ax-icon name="${n}"></ax-icon></button>`).join('')}</div>
  <table>
    <colgroup><col width="176"><col width="175"><col width="175"><col></colgroup>
    <thead><tr><th>No</th><th>Brands</th><th>Sales</th><th></th></tr></thead>
    <tbody><tr>${cell('[[Item.No-1]]')}${cell()}${cell()}<td></td></tr><tr class="new">${cell('添加行')}${cell()}${cell()}<td></td></tr></tbody>
  </table>
  <footer><button class="ok">确定</button><button>取消</button></footer>`);

/* ---------- red call-outs drawn over the window ---------- */
define('ax-annotations', () => `
  <style>:host { position: absolute; left: 0; top: -1px; pointer-events: none; } svg { display: block; overflow: visible; }</style>
  <svg width="10" height="10" aria-hidden="true">
    <g fill="none" stroke="#ee1c25" stroke-width="4" stroke-linejoin="round"><rect x="942" y="640" width="207" height="52"/><rect x="2178" y="792" width="172" height="48"/></g>
    <g stroke="#ee1c25" stroke-width="8" stroke-linecap="round"><path d="M1005 522L1029 616"/><path d="M2164 801L1218 500"/></g>
    <path d="M1034 638L1013 610l13 3 14-8zM1191 491l34-4-8 11 0 16z" fill="#ee1c25"/>
  </svg>`);
</script>
</body>
</html>
